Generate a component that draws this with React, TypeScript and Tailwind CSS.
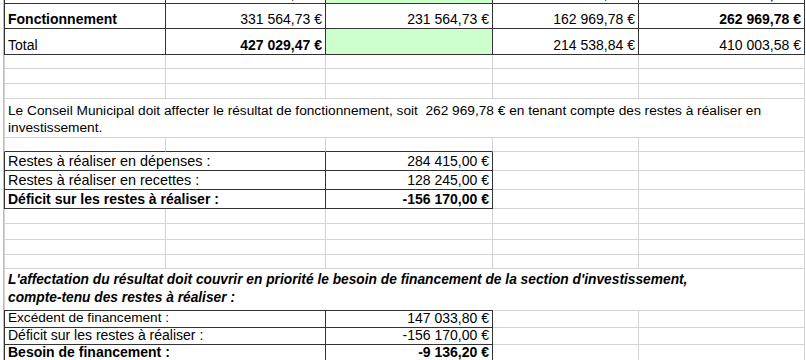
import React from "react";

const dark = "border-r-[#333333] border-b-[#333333]";
const light = "border-r-[#d4d4d4] border-b-[#d4d4d4]";
const darkL = "border-l border-l-[#333333]";
const lightL = "border-l border-l-[#d4d4d4]";

function Cell({ className = "", children }: { className?: string; children?: React.ReactNode }) {
  return (
    <div
      className={`flex shrink-0 items-end overflow-hidden whitespace-nowrap border-b border-r px-[3px] pb-px leading-[16px] ${className}`}
    >
      {children}
    </div>
  );
}

function EmptyRow({ h, topTable = false }: { h: string; topTable?: boolean }) {
  return (
    <div className={`flex ${h}`}>
      <Cell className={`w-[162px] ${lightL} ${topTable ? "border-b-[#333333] border-r-[#d4d4d4]" : light}`} />
      <Cell className={`w-[160px] ${topTable ? "border-b-[#333333] border-r-[#d4d4d4]" : light}`} />
      <Cell className={`w-[167px] ${topTable ? "border-b-[#333333] border-r-[#d4d4d4]" : light}`} />
      <Cell className={`w-[146px] ${light}`} />
      <Cell className={`w-[166px] ${light}`} />
    </div>
  );
}

function SmallRow({
  label,
  value,
  bold = false,
  h,
  size,
}: {
  label: string;
  value: string;
  bold?: boolean;
  h: string;
  size: string;
}) {
  return (
    <div className={`flex ${h} ${bold ? "font-bold" : ""}`}>
      <Cell className={`w-[322px] ${size} ${darkL} ${dark}`}>{label}</Cell>
      <Cell className={`w-[167px] justify-end ${dark}`}>{value}</Cell>
      <Cell className={`w-[146px] ${light}`} />
      <Cell className={`w-[166px] ${light}`} />
    </div>
  );
}

export default function App() {
  return (
    <div className="h-[360px] w-[806px] overflow-hidden bg-white font-['Liberation_Sans',Arial,sans-serif] text-[14px] text-black">
      <div className="ml-[3px] border-l border-l-[#bdbdbd]">
        {/* top table, first row mostly scrolled away */}
        <div className="-mt-[21px] flex h-[25px]">
          <Cell className={`w-[162px] font-bold ${darkL} ${dark}`}>Investissement</Cell>
          <Cell className={`w-[160px] justify-end ${dark}`}>95 464,74 €</Cell>
          <Cell className={`w-[167px] bg-[#ccffcc] ${dark}`} />
          <Cell className={`w-[146px] justify-end ${dark}`}>51 569,06 €</Cell>
          <Cell className={`w-[166px] justify-end font-bold ${dark}`}>147 033,80 €</Cell>
        </div>
        <div className="flex h-[25px]">
          <Cell className={`w-[162px] font-bold ${darkL} ${dark}`}>Fonctionnement</Cell>
          <Cell className={`w-[160px] justify-end ${dark}`}>331 564,73 €</Cell>
          <Cell className={`w-[167px] justify-end ${dark}`}>231 564,73 €</Cell>
          <Cell className={`w-[146px] justify-end ${dark}`}>162 969,78 €</Cell>
          <Cell className={`w-[166px] justify-end font-bold ${dark}`}>262 969,78 €</Cell>
        </div>
        <div className="flex h-[26px]">
          <Cell className={`w-[162px] pb-[2px] ${darkL} ${dark}`}>Total</Cell>
          <Cell className={`w-[160px] justify-end pb-[2px] font-bold ${dark}`}>427 029,47 €</Cell>
          <Cell className={`w-[167px] bg-[#ccffcc] ${dark}`} />
          <Cell className={`w-[146px] justify-end pb-[2px] ${dark}`}>214 538,84 €</Cell>
          <Cell className={`w-[166px] justify-end pb-[2px] ${dark}`}>410 003,58 €</Cell>
        </div>
        <EmptyRow h="h-[14px]" />
        <EmptyRow h="h-[15px]" />
        <EmptyRow h="h-[15px]" />

        {/* commentary */}
        <div className={`h-[39px] w-[801px] border-b border-r px-[3px] pt-[3px] text-[13.7px] leading-[17px] ${lightL} ${light}`}>
          <p className="whitespace-pre">
            Le Conseil Municipal doit affecter le résultat de fonctionnement, soit  262 969,78 € en tenant compte des restes à réaliser en
          </p>
          <p>investissement.</p>
        </div>
        <EmptyRow h="h-[14px]" topTable />

        <SmallRow h="h-[19px]" size="text-[14.4px]" label="Restes à réaliser en dépenses :" value="284 415,00 €" />
        <SmallRow h="h-[19px]" size="text-[14.4px]" label="Restes à réaliser en recettes :" value="128 245,00 €" />
        <SmallRow h="h-[19px]" size="text-[14px]" bold label="Déficit sur les restes à réaliser :" value="-156 170,00 €" />

        <EmptyRow h="h-[15px]" />
        <EmptyRow h="h-[16px]" />
        <EmptyRow h="h-[15px]" />
        <EmptyRow h="h-[14px]" />

        {/* affectation note */}
        <div className={`w-[801px] border-r ${lightL} border-r-[#d4d4d4]`}>
          <div className="h-[41px] px-[3px] pt-[2px] text-[13.75px] font-bold italic leading-[18px]">
            <p>L'affectation du résultat doit couvrir en priorité le besoin de financement de la section d'investissement,</p>
            <p>compte-tenu des restes à réaliser :</p>
          </div>
        </div>
        <div className="flex h-px w-[801px]">
          <div className="w-[489px] bg-[#333333]" />
          <div className="flex-1 bg-[#d4d4d4]" />
        </div>

        <SmallRow h="h-[17px]" size="text-[13.6px]" label="Excédent de financement :" value="147 033,80 €" />
        <SmallRow h="h-[17px]" size="text-[14px]" label="Déficit sur les restes à réaliser :" value="-156 170,00 €" />
        <SmallRow h="h-[17px]" size="text-[14px]" bold label="Besoin de financement :" value="-9 136,20 €" />
      </div>
    </div>
  );
}
